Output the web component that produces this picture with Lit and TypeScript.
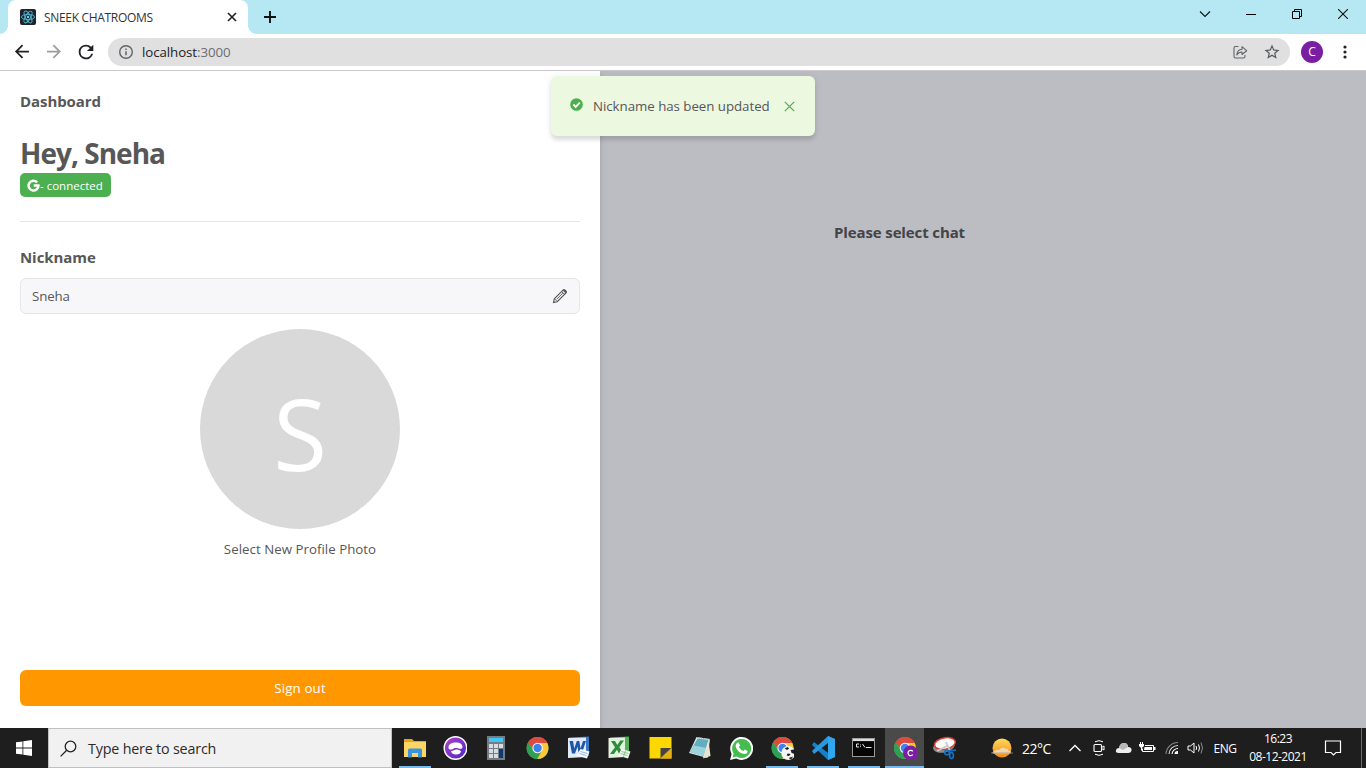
import { LitElement, html, svg, css } from "lit";
import { customElement } from "lit/decorators.js";

const icon = (w: number, h: number, body: unknown, box = `0 0 ${w} ${h}`) =>
  html`<svg width=${w} height=${h} viewBox=${box} fill="none" aria-hidden="true">${body}</svg>`;

const sharedStyles = css`
  :host { display: block; font-family: "Open Sans", "Noto Sans", sans-serif; }
  * { box-sizing: border-box; }
  svg { display: block; flex: none; }
`;

const chromeLogo = svg`
  <circle cx="12" cy="12" r="11" fill="#4caf50"/>
  <path d="M12 12L2.5 6.5A11 11 0 0 1 21.5 6.5L21.5 7H12Z" fill="#e0493b"/>
  <path d="M2.5 6.5A11 11 0 0 1 21.5 6.5L20.5 8H12L8 13.5Z" fill="#dd4b3e"/>
  <path d="M21.6 7A11 11 0 0 1 11.5 23L16 14.5L13 7Z" fill="#fcc934"/>
  <path d="M2.5 6.5A11 11 0 0 0 11.5 23L16.2 14.8L12 17L7.6 14.6Z" fill="#2fa053"/>
  <circle cx="12" cy="12" r="5.3" fill="#f4f7fb"/>
  <circle cx="12" cy="12" r="4.2" fill="#3f82ee"/>`;

@customElement("browser-bar")
class BrowserBar extends LitElement {
  static styles = [sharedStyles, css`
    .tabs { height: 34px; background: #b6e8f3; display: flex; align-items: stretch; padding-left: 8px; }
    .tab { position: relative; width: 240px; background: #fff; border-radius: 8px 8px 0 0; display: flex; align-items: center; padding: 0 10px 0 12px; }
    .tab::before, .tab::after { content: ""; position: absolute; bottom: 0; width: 8px; height: 8px; }
    .tab::before { left: -8px; background: radial-gradient(circle at 0 0, #b6e8f3 7.5px, #fff 8px); }
    .tab::after { right: -8px; background: radial-gradient(circle at 100% 0, #b6e8f3 7.5px, #fff 8px); }
    .title { flex: 1; margin-left: 8px; font-size: 12px; letter-spacing: -0.32px; color: #333; white-space: nowrap; }
    .plus { display: flex; align-items: center; margin-left: 16px; }
    .window { margin-left: auto; display: grid; grid-template-columns: repeat(4, 46px); justify-items: center; align-items: center; height: 28px; }
    .tools { height: 37px; background: #fff; border-bottom: 1px solid #c9c9cb; display: flex; align-items: center; padding: 0 11px 0 11px; }
    .nav { display: flex; gap: 11px; }
    .omnibox { flex: 1; margin-left: 11px; height: 28px; border-radius: 14px; background: #e0e0e0; display: flex; align-items: center; padding: 0 9px 0 9px; }
    .url { margin-left: 7px; flex: 1; font-size: 13.3px; letter-spacing: -0.08px; color: #202124; }
    .port { color: #6b6d70; }
    .star { margin-left: 15px; }
    .avatar { width: 22px; height: 22px; border-radius: 50%; background: #7b1fa2; color: #fff; font-size: 12px; line-height: 22px; text-align: center; margin: 0 12px 0 11px; }
  `];

  render() {
    return html`
      <div class="tabs">
        <div class="tab">
          ${icon(16, 16, svg`<rect width="16" height="16" rx="2" fill="#20232a"/>
            <g stroke="#4fb8d3" stroke-width=".9"><ellipse cx="8" cy="8" rx="6.6" ry="2.6"/><ellipse cx="8" cy="8" rx="6.6" ry="2.6" transform="rotate(60 8 8)"/><ellipse cx="8" cy="8" rx="6.6" ry="2.6" transform="rotate(120 8 8)"/></g>
            <circle cx="8" cy="8" r="1.2" fill="#61dafb"/>`)}
          <span class="title">SNEEK CHATROOMS</span>
          ${icon(12, 12, svg`<path d="M2 2L10 10M10 2L2 10" stroke="#202124" stroke-width="1.6"/>`)}
        </div>
        <div class="plus">${icon(12, 12, svg`<path d="M6 0V12M0 6H12" stroke="#111" stroke-width="1.9"/>`)}</div>
        <div class="window">
          ${icon(12, 12, svg`<path d="M1 3.5L6 8.5L11 3.5" stroke="#111" stroke-width="1.1"/>`)}
          ${icon(10, 10, svg`<path d="M0 5.5H10" stroke="#000"/>`)}
          ${icon(10, 10, svg`<path d="M.5 2.5H7.500V9.500H.5ZM2.500 2.500V.5H9.500V7.500H7.500" stroke="#000"/>`)}
          ${icon(10, 10, svg`<path d="M0 0L10 10M10 0L0 10" stroke="#111" stroke-width="1.1"/>`)}
        </div>
      </div>
      <div class="tools">
        <div class="nav">
          ${icon(21, 21, svg`<path d="M20 11H7.830l5.590-5.590L12 4l-8 8 8 8 1.410-1.410L7.830 13H20v-2z" fill="#202124"/>`, "-.5 0 24 24")}
          ${icon(21, 21, svg`<path d="M12 4l-1.410 1.410L16.170 11H4v2h12.170l-5.580 5.590L12 20l8-8z" fill="#9b9da0"/>`, "-.5 0 24 24")}
          ${icon(22, 22, svg`<path d="M17.650 6.350A7.958 7.958 0 0 0 12 4a8 8 0 1 0 7.730 10h-2.080A6 6 0 1 1 12 6c1.660 0 3.140.69 4.220 1.780L13 11h7V4l-2.350 2.350z" fill="#202124"/>`, "0 0 24 24")}
        </div>
        <div class="omnibox">
          ${icon(18, 18, svg`<circle cx="9" cy="9" r="6.300" stroke="#5f6368" stroke-width="1.400"/><path d="M9 8.200V12.300M9 5.400V6.900" stroke="#5f6368" stroke-width="1.500"/>`)}
          <span class="url">localhost<span class="port">:3000</span></span>
          ${icon(16, 16, svg`<path d="M6.500 2.500H3.500Q2 2.500 2 4V12.500Q2 14 3.500 14H11.500Q13 14 13 12.500V11" stroke="#606368" stroke-width="1.100"/><path d="M4.800 11C5 7.500 7 5.500 10 5.300V2.700L14.700 6.700L10 10.500V8C7.800 8 6.200 8.800 4.800 11Z" stroke="#606368" stroke-width="1.100" stroke-linejoin="round"/>`)}
          <span class="star">${icon(18, 18, svg`<path d="M22 9.240l-7.190-.62L12 2 9.190 8.630 2 9.240l5.460 4.730L5.820 21 12 17.270 18.180 21l-1.630-7.030L22 9.240zM12 15.400l-3.760 2.270 1-4.280-3.320-2.880 4.380-.38L12 6.100l1.710 4.040 4.380.38-3.320 2.880 1 4.280L12 15.400z" fill="#55585c"/>`, "0 0 24 24")}</span>
        </div>
        <span class="avatar">C</span>
        ${icon(20, 20, svg`<g fill="#202124"><circle cx="10" cy="5" r="1.600"/><circle cx="10" cy="10" r="1.600"/><circle cx="10" cy="15" r="1.600"/></g>`)}
      </div>`;
  }
}

@customElement("dashboard-drawer")
class DashboardDrawer extends LitElement {
  static styles = [sharedStyles, css`
    :host { width: 600px; height: 657px; background: #fff; color: #575757; box-shadow: 0 4px 4px rgba(0,0,0,.12), 0 0 10px rgba(0,0,0,.06); }
    .panel { height: 100%; display: flex; flex-direction: column; padding: 20px 20px 22px; align-items: stretch; }
    .label { font-size: 15px; font-weight: 700; line-height: 20px; letter-spacing: -0.07px; }
    .hello { margin: 24px 0 0; font-size: 28px; line-height: 36px; font-weight: 700; letter-spacing: -0.98px; }
    .badge { margin-top: 2px; align-self: flex-start; width: 91px; height: 24px; border-radius: 5px; background: #4caf50; color: #fff; display: flex; align-items: center; padding-left: 7px; font-size: 11.500px; font-weight: 500; white-space: nowrap; }
    .rule { height: 1px; background: #e5e5ea; margin: 24px 0; flex: none; }
    .nick { line-height: 22px; }
    .field { margin-top: 10px; height: 36px; border: 1px solid #e5e5ea; border-radius: 6px; background: #f7f7fa; display: flex; align-items: center; justify-content: space-between; padding: 0 11px; font-size: 13.300px; letter-spacing: -0.15px; }
    .photo { align-self: center; margin-top: 15px; width: 200px; height: 200px; padding-top: 7px; border-radius: 50%; background: #d9d9d9; color: #fff; display: flex; align-items: center; justify-content: center; font-size: 98px; line-height: 1; }
    .pick { margin-top: 10px; text-align: center; font-size: 13.300px; line-height: 20px; letter-spacing: 0.02px; }
    .signout { margin-top: auto; height: 36px; border: 0; border-radius: 6px; background: #ff9800; color: #fff; font: 500 13.300px "Open Sans", sans-serif; letter-spacing: 0.15px; }
  `];

  render() {
    return html`<div class="panel">
      <div class="label">Dashboard</div>
      <h3 class="hello">Hey, Sneha</h3>
      <div class="badge">
        ${icon(13, 13, svg`<path d="M10.100 3.300A4.900 4.900 0 1 0 11.400 6.500H6.700" stroke="#fff" stroke-width="2.500"/>`)}
        <span>- connected</span>
      </div>
      <div class="rule"></div>
      <div class="label nick">Nickname</div>
      <div class="field"><span>Sneha</span>
        ${icon(16, 16, svg`<path d="M1.500 14.500L2.300 10.800L11 2.100Q12 1.100 13 2.100L13.900 3Q14.900 4 13.900 5L5.200 13.700Z" stroke="#575757" stroke-width="1.100"/><path d="M10.700 2.500L13.500 5.300L14.600 4.200Q15 3.500 12.500 1.400Z" fill="#575757"/><path d="M2.500 10.800L5.200 13.500M4.700 11.200L11 4.900M9.700 3.600L12.500 6.400M1.500 14.500L3 14" stroke="#575757" stroke-width=".9"/>`)}
      </div>
      <div class="photo">S</div>
      <div class="pick">Select New Profile Photo</div>
      <button class="signout">Sign out</button>
    </div>`;
  }
}

@customElement("task-bar")
class TaskBar extends LitElement {
  static styles = [sharedStyles, css`
    .bar { height: 40px; background: #1e1e1e; display: flex; color: #fff; }
    .start { width: 48px; display: grid; place-items: center; }
    .search { width: 344px; background: #f1f1f1; border: 1px solid #bfbfbf; display: flex; align-items: center; padding-left: 11px; color: #2b2b2b; font-size: 14.300px; letter-spacing: -0.18px; }
    .search span { margin-left: 11px; }
    .apps { display: flex; gap: 1.850px; margin-left: 3px; }
    .app { width: 39px; height: 40px; display: grid; place-items: center; background-repeat: no-repeat; background-position: 50% 100%; }
    .running { background-image: linear-gradient(#76b9ed, #76b9ed); background-size: 32px 2px; }
    .active { background-color: #4a4a4a; background-size: 39px 2px; }
    .tray { margin-left: auto; display: grid; grid-template-columns: 32px 45px 24px 24px 24px 24px 26px 20px 40px 66px 44px 7px; align-items: center; justify-items: center; padding-right: 4px; font-size: 12px; letter-spacing: -0.5px; }
    .temp { justify-self: start; padding-left: 4px; font-size: 14px; letter-spacing: -0.5px; }
    .clock { text-align: center; line-height: 18px; font-size: 12px; }
    .peek { justify-self: end; width: 1px; height: 40px; background: #6a6a6a; }
  `];

  private apps = [
    { state: "running", art: svg`<path d="M1 3H9L11 5H23V19H1Z" fill="#e8a317"/><path d="M1 6H23V21H1Z" fill="#fcd566"/><path d="M5 14Q5 12.500 6.500 12.500H17.500Q19 12.500 19 14V21.500H15V17H9V21.500H5Z" fill="#3a94dc"/>` },
    { state: "", art: svg`<defs><linearGradient id="violet" x2="1" y2="1"><stop stop-color="#b044c8"/><stop offset="1" stop-color="#4a25c8"/></linearGradient></defs><circle cx="12.500" cy="12" r="11.300" fill="url(#violet)" stroke="#fff" stroke-width="1.400"/><path d="M5.500 11.500C5.500 8 8.500 6.500 13 6.500S19.500 8.500 19.500 11C19.500 13 17 13.300 15 12.300C13 11.500 11 12 9.500 13.200C7.500 14 5.500 13.500 5.500 11.500Z" fill="#fff"/><path d="M8 15.300C11 14.500 12 13.200 14 13.500S17.500 15 18 15C18 17.500 15.500 18.500 13 18.500S8.500 17.500 8 15.300Z" fill="#fff"/>` },
    { state: "", art: svg`<rect x="3" y="0" width="18" height="24" fill="#747d86"/><rect x="5" y="2" width="14" height="4" fill="#3ec6f4"/><g fill="#d8dde1"><path d="M5 8H9V12H5ZM10 8H14V12H10ZM15 8H19V12H15ZM5 13H9V17H5ZM10 13H14V17H10ZM5 18H9V22H5ZM10 18H14V22H10Z"/></g><path d="M15 13H19V22H15Z" fill="#0c3a75"/>` },
    { state: "", art: svg`<g transform="translate(.6 0)">${chromeLogo}</g>` },
    { state: "", art: svg`<path d="M3 1.500L23 .5V20H3Z" fill="#3a78c4"/><path d="M2 2L20 1.500V21L2 22Z" fill="#dfeafa"/><path d="M3.500 5H7L8.300 12.500L10.800 5H13.300L14.500 12.500L17 5H20L15.800 17.500H12.700L11.500 10.500L9 17.500H6Z" fill="#1f57a8"/><path d="M14.500 13L23.500 15.500L21 22.500L10.500 19.500Z" fill="#f4f8ff"/><path d="M14.500 15.500L21.500 17.500M13.500 17.500L20.500 19.500" stroke="#8fb0dd" stroke-width=".9"/>` },
    { state: "", art: svg`<path d="M3 1.500L22 .5V20H3Z" fill="#55b05a"/><path d="M1.500 2L18 1.500V21L1.500 22Z" fill="#e1f2de"/><path d="M4 5H8L10.300 9L13.300 4.500H17L12.300 11.300L16.500 18H12.300L9.900 13.800L7 18H3L8 11.300Z" fill="#2c8c3b"/><path d="M14.500 13L23.500 15.500L21 22.500L11 19.500Z" fill="#f3faf0"/><path d="M14.500 15.500L21.500 17.500M13.500 17.500L20.500 19.500M18.500 14.500L16.500 21" stroke="#82c184" stroke-width=".9"/>` },
    { state: "", art: svg`<path d="M1.500 1H23.500V22.500H1.500Z" fill="#fdd800"/><path d="M12.500 22.500V12H23.500Z" fill="#444"/><path d="M23.500 12V22.500H12.500Z" fill="#e9ae12"/>` },
    { state: "", art: svg`<path d="M8.500 1L22 3L19.500 22L1 17Z" fill="#d9ecee"/><path d="M9.500 2.500L20.500 4L15.500 20L2 16Z" fill="#62aebe"/><path d="M6 9.500L18.500 12L15.500 20L2 16Z" fill="#9bd3dc"/><path d="M20.500 4L22.500 20L15 22.500Z" fill="#e9e3d0"/><path d="M9 1.500L22 3.500" stroke="#9a9a9a" stroke-dasharray="1 1"/>` },
    { state: "", art: svg`<g transform="translate(.6 0)"><path d="M.5 24L2 18A11.500 11.500 0 1 1 6.500 22.500Z" fill="#fff"/><path d="M3 21.500L4 17.500A9.500 9.500 0 1 1 7 20.500Z" fill="#43bd4b"/><path d="M7.500 6.800L9 6.500L10.500 9.500L9.300 11Q11 14 13.800 15L15.200 13.500L18 15Q18 18 15 18Q8 17 6 10.500Q6 8 7.500 6.800Z" fill="#fff"/></g>` },
    { state: "running", art: svg`<g transform="translate(.6 0)">${chromeLogo}<circle cx="17.700" cy="17" r="7" fill="#f5f5f5"/><path d="M14 12.500L17 11L18.500 12.500L16.500 14ZM20 14L23.500 13.500L24 18L21 17ZM17 17.500L20 18L18.500 20L16 19.500ZM18 22L22.500 20.500L20.500 23.500Z" fill="#1e1e1e"/></g>` },
    { state: "running", art: svg`<path d="M17 0L24 3V21L17 24L1 9L3 6L17 17Z" fill="#1680ca"/><path d="M1 15L3 18L17 7V0Z" fill="#2a98df"/><path d="M17 0L24 3V21L17 24Z" fill="#30a6f0"/>` },
    { state: "running", art: svg`<rect x=".5" y="2.500" width="22" height="18" fill="#050505" stroke="#999"/><path d="M1 4H22" stroke="#ddd" stroke-width="2.200"/><path d="M7 8H4.500V11H7M8.500 8.500V9.300M8.500 10.300V11.100M10.500 8L13 11.500M14 11.500H19.500" stroke="#e8e8e8" stroke-width="1"/>` },
    { state: "running active", art: svg`${chromeLogo}<circle cx="17.500" cy="17" r="7.500" fill="#7b1fa2"/><path d="M19.800 15.300A2.700 2.700 0 1 0 19.800 18.700" stroke="#fff" stroke-width="1.200"/>` },
    { state: "", art: svg`<ellipse cx="11" cy="10.500" rx="11" ry="6" fill="#8b8b8b" transform="rotate(-12 11 11)"/><ellipse cx="12" cy="7.500" rx="10.500" ry="5.700" fill="#fafafa" stroke="#d94336" stroke-width="1.500" transform="rotate(-10 12 8)"/><path d="M4 15L15 9.500M13 6L16.500 14" stroke="#c9c9c9" stroke-width="1.700"/><circle cx="14" cy="16.500" r="2.300" stroke="#1774c4" stroke-width="1.600"/><ellipse cx="18.500" cy="19.500" rx="1.900" ry="3" stroke="#1774c4" stroke-width="1.600"/><path d="M16 15L23 14" stroke="#1774c4" stroke-width="1.600"/>` },
  ];

  render() {
    return html`<div class="bar">
      <div class="start">${icon(16, 16, svg`<path d="M0 2.300L6.500 1.400V7.500H0ZM7.300 1.300L16 0V7.500H7.300ZM0 8.400H6.500V14.600L0 13.700ZM7.300 8.400H16V16L7.300 14.700Z" fill="#fff"/>`)}</div>
      <div class="search">${icon(17, 17, svg`<circle cx="10.500" cy="6.500" r="5.300" stroke="#222" stroke-width="1.300"/><path d="M6.700 10.300L.6 16.400" stroke="#222" stroke-width="1.300"/>`)}<span>Type here to search</span></div>
      <div class="apps">${this.apps.map((a) => html`<div class="app ${a.state}">${icon(24, 24, a.art)}</div>`)}</div>
      <div class="tray">
        ${icon(24, 22, svg`<defs><linearGradient id="sun" x2="0" y2="1"><stop stop-color="#ffd95a"/><stop offset="1" stop-color="#f28a18"/></linearGradient></defs><circle cx="12" cy="11" r="9.500" fill="url(#sun)"/><path d="M3 16.500Q1 15 5 14Q6 12 9 13Q12 9.500 15 11.500Q18 11 18.500 13.500Q22 14 20.500 16.500Z" fill="#eee0c6" opacity=".85"/><path d="M1 16H23" stroke="#a49886" opacity=".7"/>`)}
        <span class="temp">22°C</span>
        ${icon(14, 10, svg`<path d="M1.500 8L7 2.500L12.500 8" stroke="#fff" stroke-width="1.300"/>`)}
        ${icon(14, 18, svg`<rect x="2" y="5.500" width="7.500" height="7" rx="1" stroke="#fff" stroke-width="1.100"/><path d="M9.500 8.500L12 7V11L9.500 9.500" stroke="#fff"/><path d="M3 2.800Q7 .5 11 2.800M3 15.200Q7 17.500 11 15.200" stroke="#fff" stroke-width="1"/>`)}
        ${icon(17, 12, svg`<path d="M4 11Q0 11 1 8Q1.500 6 4 6Q5 1 9 1T13 5Q17 5 16.500 8.500Q16 11 13 11Z" fill="#eee"/><path d="M4 6Q5 1 9 1Q12.500 1 13 5L8 8Z" fill="#b8b8b8"/>`)}
        ${icon(17, 12, svg`<path d="M6 3.500H14.500V9.500H3.500V6.500" stroke="#fff"/><path d="M5.500 5H13V8H5ZM15 5H16.500V8H15Z" fill="#fff"/><path d="M1.500 0V2M3.500 0V2M2.500 5V8.500" stroke="#fff"/><path d="M0 2H5V4L3.500 5.500H1.500L0 4Z" fill="#fff"/>`)}
        ${icon(14, 14, svg`<g stroke-width="1.100"><path d="M1 13A12 12 0 0 1 13 1.500" stroke="#888"/><path d="M4 13A9 9 0 0 1 13 4.500" stroke="#ddd"/><path d="M7 13A6 6 0 0 1 13 7.500" stroke="#fff"/></g><path d="M9.500 13A3.200 3.200 0 0 1 13 10V13Z" fill="#fff"/>`)}
        ${icon(17, 14, svg`<path d="M1 5H3.500L7 2V12L3.500 9H1Z" stroke="#fff"/><path d="M9 5Q10.300 7 9 9M11.500 3.500Q13.500 7 11.500 10.500" stroke="#fff"/><path d="M14 1.500Q17 7 14 12.500" stroke="#8a8a8a"/>`)}
        <span>ENG</span>
        <div class="clock">16:23<br>08-12-2021</div>
        ${icon(18, 18, svg`<path d="M1.500 2H16.500V13.500H12L9.500 16L7 13.500H1.500Z" stroke="#fff" stroke-width="1.200"/>`)}
        <span class="peek"></span>
      </div>
    </div>`;
  }
}

@customElement("app-root")
class AppRoot extends LitElement {
  static styles = [sharedStyles, css`
    :host { position: relative; width: 1366px; height: 768px; overflow: hidden; }
    .page { height: 657px; display: flex; background: #bcbdc2; overflow: hidden; }
    .empty { margin: 151px 0 0 234px; font-size: 15px; line-height: 20px; font-weight: 700; letter-spacing: -0.12px; color: #434447; }
    .toast { position: absolute; left: 551px; top: 76px; width: 264px; height: 60px; border-radius: 6px; background: #edf8e1; box-shadow: 0 4px 4px rgba(0,0,0,.12), 0 0 10px rgba(0,0,0,.06); display: flex; align-items: center; padding: 0 20px 0 19px; font-size: 13.300px; letter-spacing: -0.04px; color: #575757; }
    .message { margin-left: 10px; flex: 1; white-space: nowrap; }
    .check { margin-top: -3px; }
  `];

  render() {
    return html`
      <browser-bar></browser-bar>
      <div class="page">
        <dashboard-drawer></dashboard-drawer>
        <div class="empty">Please select chat</div>
      </div>
      <task-bar></task-bar>
      <div class="toast">
        <span class="check">${icon(13, 13, svg`<circle cx="6.500" cy="6.500" r="6.300" fill="#4caf50"/><path d="M3.400 6.500L5.700 8.800L9.800 4.600" stroke="#fff" stroke-width="1.900"/>`)}</span>
        <span class="message">Nickname has been updated</span>
        ${icon(11, 11, svg`<path d="M.8 .8L10.200 10.200M10.200 .8L.8 10.200" stroke="#4caf50" stroke-width="1.200"/>`)}
      </div>`;
  }
}
